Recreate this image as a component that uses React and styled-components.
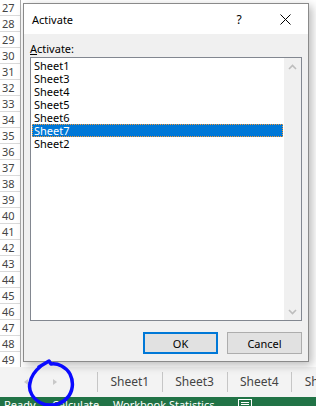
import React from 'react'
import styled, { createGlobalStyle } from 'styled-components'

const GlobalStyle = createGlobalStyle`
  html, body {
    margin: 0;
    padding: 0;
    background: #fff;
    overflow: hidden;
  }
  body {
    font-family: "Noto Sans", "Liberation Sans", sans-serif;
  }
`

const Window = styled.div`
  position: relative;
  width: 316px;
  height: 406px;
  display: flex;
  flex-direction: column;
  overflow: hidden;
  background: #fff;
`

const Sheet = styled.div`
  height: 367px;
  flex: none;
  display: flex;
  flex-flow: row nowrap;
  overflow: hidden;
`

const RowHeaders = styled.div`
  width: 20px;
  border-right: 1px solid #ababab;
  display: flex;
  flex-direction: column;
  background: #fff;
`

const RowHeader = styled.div`
  height: 15px;
  flex: none;
  border-bottom: 1px solid #dadada;
  font-size: 11px;
  line-height: 15px;
  color: #444;
  padding-left: 2px;
`

const Cells = styled.div`
  flex: 1;
  background: #fff;
`

const TabBar = styled.div`
  height: 30px;
  flex: none;
  background: #f3f3f3;
  display: flex;
  flex-flow: row nowrap;
  align-items: center;
  overflow: hidden;
`

const NavArea = styled.div`
  width: 97px;
  flex: none;
  display: flex;
  align-items: center;
  padding-left: 24px;
  gap: 25px;
  box-sizing: border-box;
`

const NavArrow = styled.div`
  width: 0;
  height: 0;
  border-top: 3.5px solid transparent;
  border-bottom: 3.5px solid transparent;
  ${p => p.left
    ? 'border-right: 4px solid #c8c8c8;'
    : 'border-left: 4px solid #c8c8c8;'}
`

const TabDivider = styled.div`
  width: 1px;
  height: 20px;
  flex: none;
  background: #c6c6c6;
`

const Tab = styled.div`
  flex: none;
  padding: 0 12.5px;
  font-size: 12px;
  color: #444;
  line-height: 20px;
  white-space: nowrap;
`

const StatusBar = styled.div`
  height: 9px;
  flex: none;
  background: #217346;
  display: flex;
  flex-flow: row nowrap;
  padding: 1px 0 0 4px;
  box-sizing: border-box;
  overflow: hidden;
`

const StatusItem = styled.div`
  width: ${p => p.width}px;
  flex: none;
  color: #fff;
  font-size: 11px;
  line-height: 13px;
  white-space: nowrap;
`

const Dialog = styled.div`
  position: absolute;
  left: 23px;
  top: 3px;
  width: 286px;
  height: 359px;
  box-sizing: border-box;
  border: 1px solid #8a8a8a;
  background: #f0f0f0;
  box-shadow: 3px 3px 9px rgba(0, 0, 0, 0.28);
  display: flex;
  flex-direction: column;
`

const TitleBar = styled.div`
  height: 30px;
  background: #fff;
  display: flex;
  align-items: center;
  padding-left: 8px;
`

const Title = styled.div`
  flex: 1;
  font-size: 11px;
  color: #000;
`

const TitleButton = styled.div`
  width: 46px;
  height: 30px;
  display: flex;
  align-items: center;
  justify-content: center;
  font-size: 12px;
  color: #000;
`

const Body = styled.div`
  flex: 1;
  display: flex;
  flex-direction: column;
  padding: 7px 6px 0 6px;
`

const Label = styled.div`
  font-size: 11px;
  line-height: 16px;
  color: #000;
`

const ListBox = styled.div`
  height: 264px;
  box-sizing: border-box;
  border: 1px solid #828790;
  background: #fff;
  display: flex;
  flex-flow: row nowrap;
`

const Items = styled.div`
  flex: 1;
  padding: 1px;
`

const Item = styled.div`
  height: 13px;
  box-sizing: border-box;
  line-height: 11px;
  font-size: 11px;
  padding-left: 1px;
  border: 1px ${p => (p.selected ? 'dotted #f39a3a' : 'solid transparent')};
  background: ${p => (p.selected ? '#0078d7' : 'transparent')};
  color: ${p => (p.selected ? '#fff' : '#000')};
`

const ScrollBar = styled.div`
  width: 17px;
  background: #f0f0f0;
  display: flex;
  flex-direction: column;
  justify-content: space-between;
`

const ScrollButton = styled.div`
  height: 17px;
  display: flex;
  align-items: center;
  justify-content: center;
`

const ButtonRow = styled.div`
  display: flex;
  justify-content: flex-end;
  gap: 9px;
  margin-top: 11px;
`

const Button = styled.div`
  width: 75px;
  height: 22px;
  box-sizing: border-box;
  background: #e1e1e1;
  border: ${p => (p.primary ? '2px solid #0078d7' : '1px solid #adadad')};
  display: flex;
  align-items: center;
  justify-content: center;
  font-size: 11px;
  color: #000;
`

const Annotation = styled.svg`
  position: absolute;
  left: 0;
  top: 340px;
  pointer-events: none;
`

const rows = Array.from({ length: 23 }, (_, i) => 27 + i)
const sheets = ['Sheet1', 'Sheet3', 'Sheet4', 'Sheet5', 'Sheet6', 'Sheet7', 'Sheet2']

const Chevron = ({ down }) => (
  <svg width="9" height="6" viewBox="0 0 9 6">
    <path
      d={down ? 'M1 1 L4.5 4.5 L8 1' : 'M1 5 L4.5 1.5 L8 5'}
      fill="none"
      stroke="#bdbdbd"
      strokeWidth="1.6"
    />
  </svg>
)

export default function App () {
  return (
    <Window>
      <GlobalStyle />
      <Sheet>
        <RowHeaders>
          {rows.map(r => <RowHeader key={r}>{r}</RowHeader>)}
        </RowHeaders>
        <Cells />
      </Sheet>

      <TabBar>
        <NavArea>
          <NavArrow left />
          <NavArrow />
        </NavArea>
        <TabDivider />
        <Tab>Sheet1</Tab>
        <TabDivider />
        <Tab>Sheet3</Tab>
        <TabDivider />
        <Tab>Sheet4</Tab>
        <TabDivider />
        <Tab>Sheet5</Tab>
      </TabBar>

      <StatusBar>
        <StatusItem width={48}>Ready</StatusItem>
        <StatusItem width={61}>Calculate</StatusItem>
        <StatusItem width={124}>Workbook Statistics</StatusItem>
        <svg width="16" height="12" viewBox="0 0 16 12">
          <rect x="1.5" y="1.5" width="13" height="9" fill="none" stroke="#fff" />
          <path d="M4 4.5 H12 M4 6.5 H12" stroke="#fff" />
        </svg>
      </StatusBar>

      <Dialog>
        <TitleBar>
          <Title>Activate</Title>
          <TitleButton>?</TitleButton>
          <TitleButton>
            <svg width="11" height="11" viewBox="0 0 11 11">
              <path d="M0.5 0.5 L10.5 10.5 M10.5 0.5 L0.5 10.5" stroke="#000" strokeWidth="1" />
            </svg>
          </TitleButton>
        </TitleBar>

        <Body>
          <Label><u>A</u>ctivate:</Label>
          <ListBox>
            <Items>
              {sheets.map(s => (
                <Item key={s} selected={s === 'Sheet7'}>{s}</Item>
              ))}
            </Items>
            <ScrollBar>
              <ScrollButton><Chevron /></ScrollButton>
              <ScrollButton><Chevron down /></ScrollButton>
            </ScrollBar>
          </ListBox>
          <ButtonRow>
            <Button primary>OK</Button>
            <Button>Cancel</Button>
          </ButtonRow>
        </Body>
      </Dialog>

      <Annotation width="90" height="66" viewBox="0 340 90 66">
        <path
          d="M39 367 L49 361 L51 364 C58 363 66 367 70 374 C74 382 73 392 67 398 C61 405 49 407 41 403 C33 399 28 391 30 383 C31 376 36 370 41 366"
          fill="none"
          stroke="#0a0aff"
          strokeWidth="3.5"
          strokeLinecap="round"
          strokeLinejoin="round"
        />
      </Annotation>
    </Window>
  )
}
